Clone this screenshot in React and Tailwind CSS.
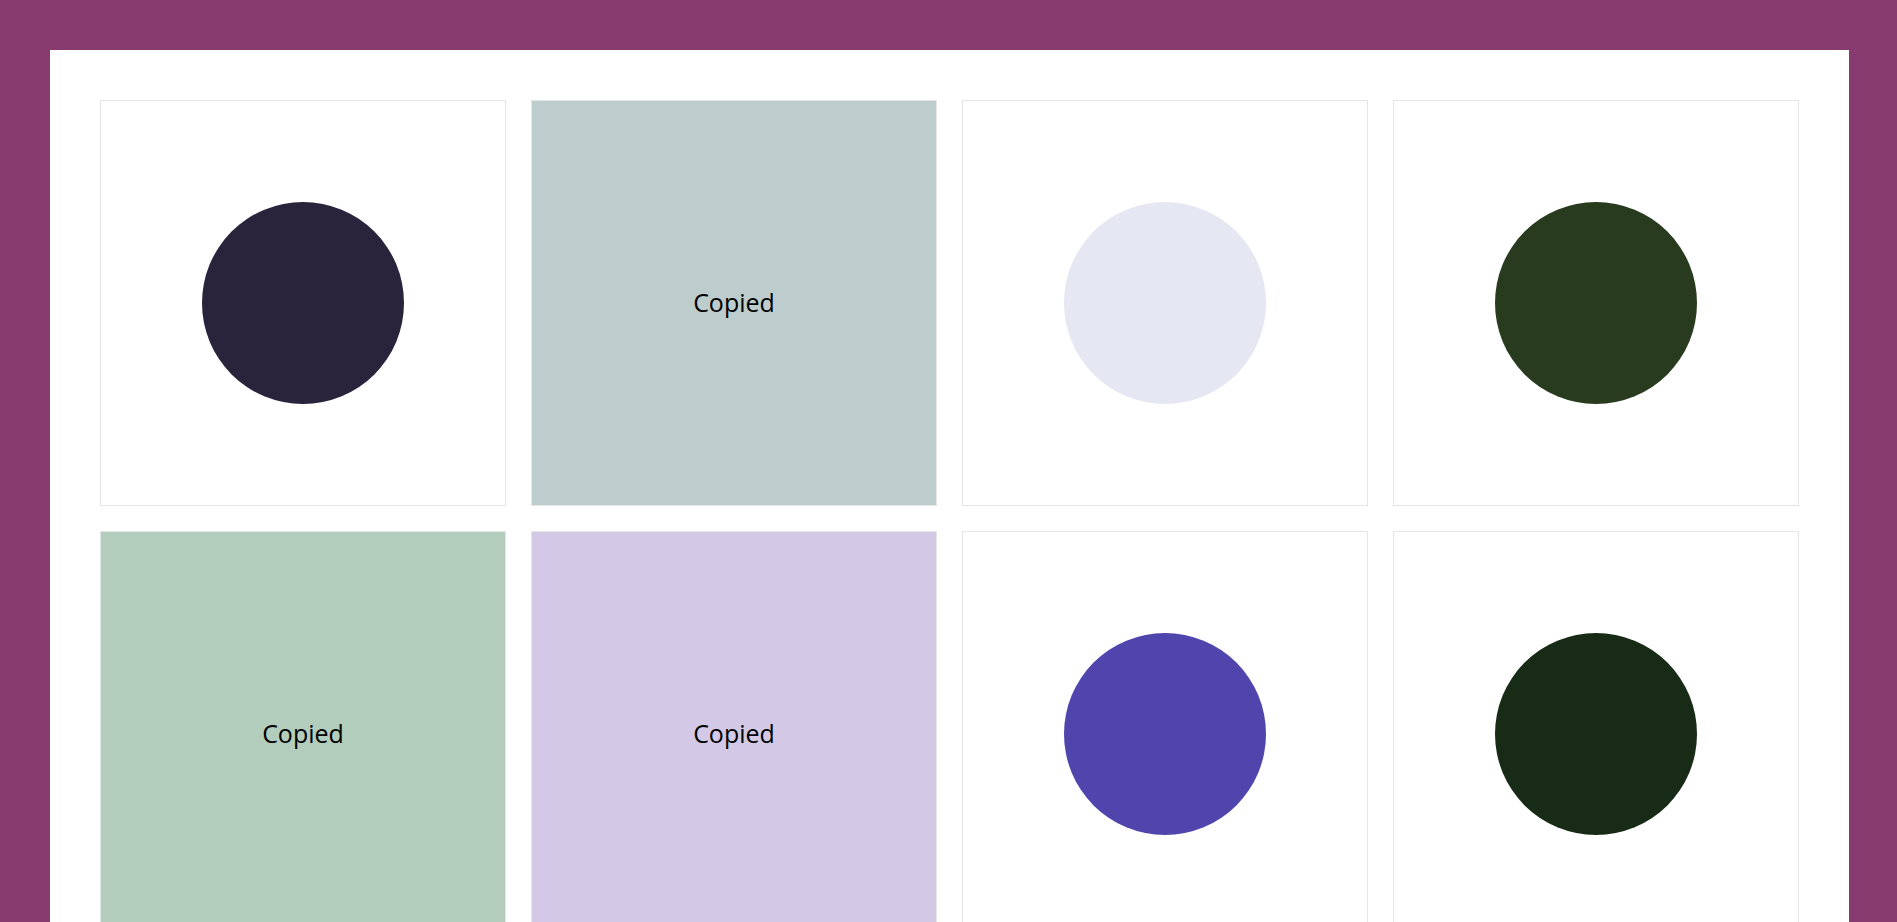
import React from "react";

const swatches = [
  { hex: "#29233c", copied: false },
  { hex: "#bdcccc", copied: true },
  { hex: "#e5e7f3", copied: false },
  { hex: "#283b1f", copied: false },
  { hex: "#b2cdbb", copied: true },
  { hex: "#d3c9e7", copied: true },
  { hex: "#5045ad", copied: false },
  { hex: "#182b17", copied: false },
];

const Swatch = ({ hex, copied }) => {
  if (copied) {
    return (
      <div
        className="w-[406px] h-[406px] border border-[#e5e5e5] flex items-center justify-center text-[25px] text-black"
        style={{ backgroundColor: hex }}
      >
        Copied
      </div>
    );
  }
  return (
    <div className="w-[406px] h-[406px] border border-[#e5e5e5] bg-white flex items-center justify-center">
      <div className="w-[202px] h-[202px] rounded-full" style={{ backgroundColor: hex }} />
    </div>
  );
};

export default function App() {
  return (
    <div className="min-h-screen bg-[#883b6f] pt-[50px] pl-[50px] pr-[48px] pb-[50px] font-['Open_Sans',sans-serif]">
      <div className="bg-white p-[50px]">
        <div className="grid grid-cols-[repeat(4,406px)] gap-[25px]">
          {swatches.map((s, i) => (
            <Swatch key={i} {...s} />
          ))}
        </div>
      </div>
    </div>
  );
}
